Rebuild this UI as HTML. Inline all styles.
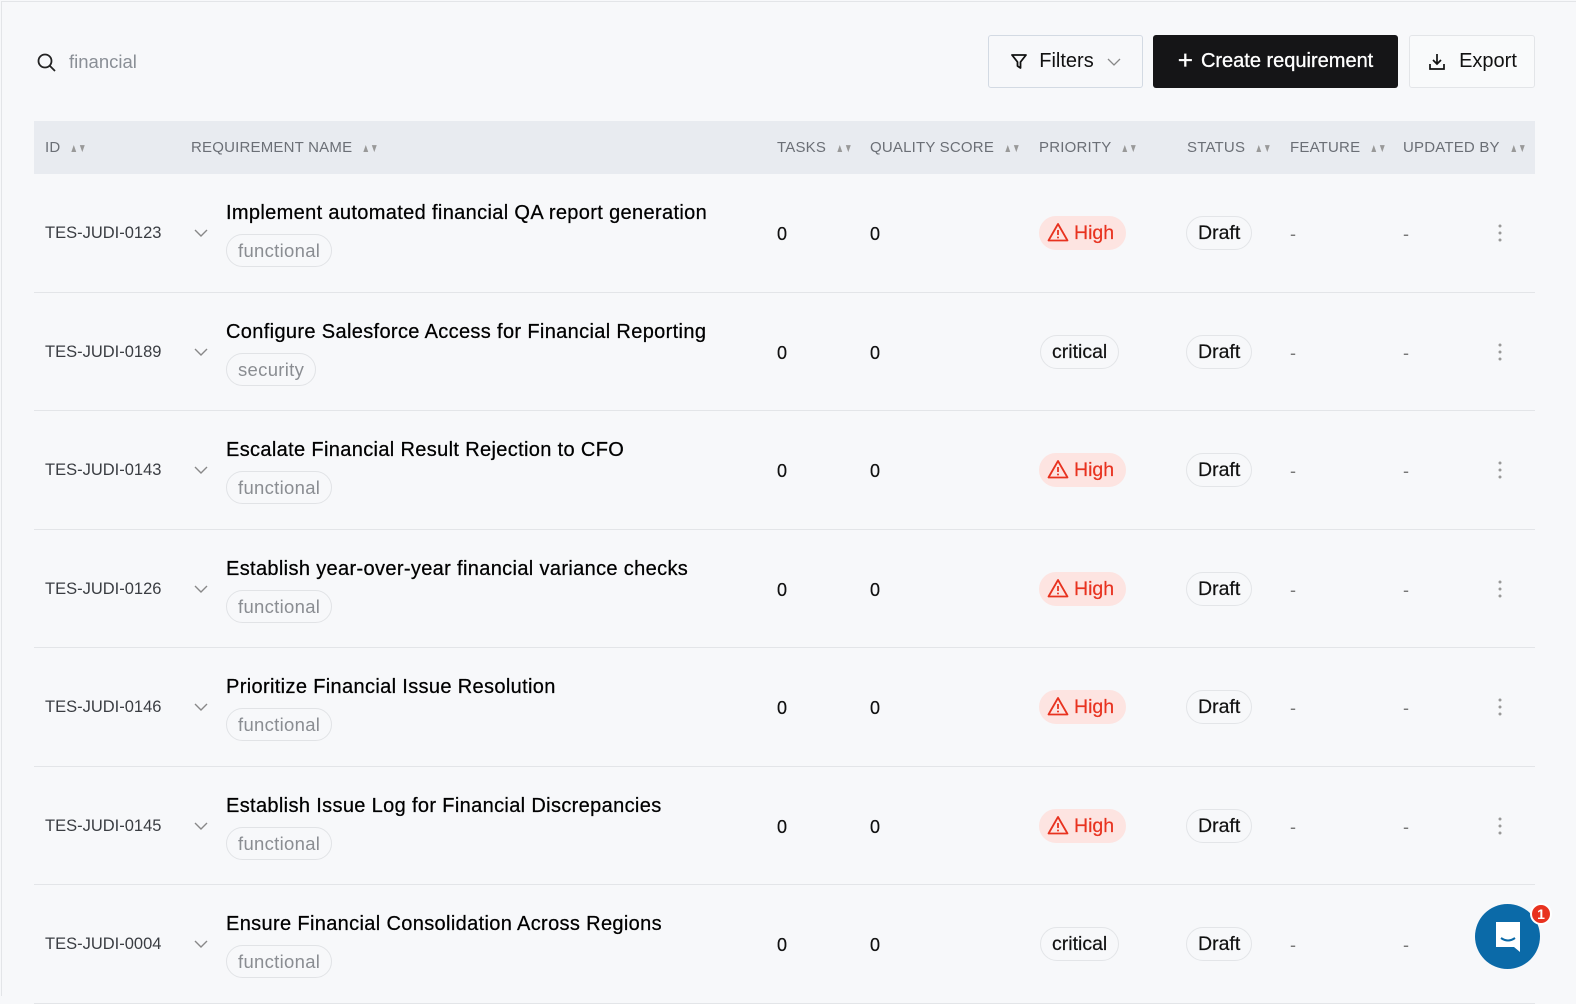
<!DOCTYPE html>
<html><head><style>
*{box-sizing:border-box;margin:0;padding:0}
body{width:1576px;height:996px;background:#f7f8fa;font-family:"Liberation Sans","DejaVu Sans",sans-serif;position:relative;overflow:hidden;color:#111}
.frame{position:absolute;left:1px;top:1px;right:0;bottom:0;border-left:1px solid #e3e5e8;border-top:1px solid #e3e5e8}
.abs{position:absolute}
.btn{position:absolute;top:35px;height:53px;display:flex;align-items:center;justify-content:center;font-size:20px;border-radius:3px}
.hdr{position:absolute;left:34px;top:121px;width:1501px;height:53px;background:#e8ebf0}
.hdr span{position:absolute;top:18px;font-size:15px;color:#6b6f76;letter-spacing:.2px}
.hdr span i{font-style:normal;font-size:12px;color:#999;margin-left:6px;display:inline-block;transform:scaleX(.7)}
.row{position:absolute;left:34px;width:1501px;height:118.5px;border-bottom:1px solid #e3e5e8}
.row .id{position:absolute;left:11px;top:50px;font-size:16.5px;color:#3a3d42}
.row .chev{position:absolute;left:160px;top:52px}
.row .t{position:absolute;left:192px;top:28px;font-size:20px;letter-spacing:.35px;color:#000;-webkit-text-stroke:.25px #000}
.row .tag{position:absolute;left:192px;top:60px;height:33px;padding:0 11px;border:1px solid #e1e3e6;border-radius:17px;font-size:18.5px;letter-spacing:.3px;color:#8a8d92;line-height:31px}
.row .n{position:absolute;top:50px;font-size:18px;-webkit-text-stroke:.2px #000}
.pill{position:absolute;top:42px;height:34px;border-radius:17px;font-size:19.5px;line-height:32px;padding:0 11px;border:1px solid #e3e5e8;-webkit-text-stroke:.2px currentColor}
.high{background:#fde4e1;color:#e8321f;border-color:#fde4e1;left:1005px;padding:0 11px 0 7px}
.crit{left:1006px}
.draft{left:1152px}
.dash{position:absolute;top:50px;font-size:18px;color:#777}
.dots{position:absolute;left:1463px;top:49px}
</style></head><body>
<div class="frame"></div>
<svg class="abs" style="left:36px;top:52px" width="22" height="22" viewBox="0 0 22 22"><circle cx="9" cy="9" r="6.5" fill="none" stroke="#222" stroke-width="1.8"/><path d="M14 14l5 5" stroke="#222" stroke-width="1.8"/></svg>
<div class="abs" style="left:69px;top:51px;font-size:18.5px;color:#8a8f96">financial</div>
<div class="btn" style="left:988px;width:155px;border:1px solid #d3dae3;background:#f7f8fa;color:#111">
<svg width="20" height="20" viewBox="0 0 20 20" style="margin-right:10px"><path d="M3 3h14l-5.5 7v6l-3-2v-4z" fill="none" stroke="#111" stroke-width="1.8" stroke-linejoin="round"/></svg>Filters
<svg width="16" height="16" viewBox="0 0 16 16" style="margin-left:12px"><path d="M2 5l6 6 6-6" fill="none" stroke="#888" stroke-width="1.3"/></svg></div>
<div class="btn" style="left:1153px;width:245px;background:#151517;color:#fff;border-radius:3px;-webkit-text-stroke:.3px #fff"><span style="font-size:26px;font-weight:300;margin-right:8px;margin-top:-3px">+</span>Create requirement</div>
<div class="btn" style="left:1409px;width:126px;border:1px solid #e3e5e8;background:#f9fafb;color:#111">
<svg width="20" height="20" viewBox="0 0 20 20" style="margin-right:12px"><path d="M10 2v10M6 8l4 4 4-4M3 12v5h14v-5" fill="none" stroke="#111" stroke-width="1.7"/></svg>Export</div>
<div class="hdr">
<span style="left:11px">ID<i>▲▼</i></span>
<span style="left:157px">REQUIREMENT NAME<i>▲▼</i></span>
<span style="left:743px">TASKS<i>▲▼</i></span>
<span style="left:836px">QUALITY SCORE<i>▲▼</i></span>
<span style="left:1005px">PRIORITY<i>▲▼</i></span>
<span style="left:1153px">STATUS<i>▲▼</i></span>
<span style="left:1256px">FEATURE<i>▲▼</i></span>
<span style="left:1369px">UPDATED BY<i>▲▼</i></span>
</div>
<div id="rows"></div>
<script>
var d=[["TES-JUDI-0123","Implement automated financial QA report generation","functional",1],
["TES-JUDI-0189","Configure Salesforce Access for Financial Reporting","security",0],
["TES-JUDI-0143","Escalate Financial Result Rejection to CFO","functional",1],
["TES-JUDI-0126","Establish year-over-year financial variance checks","functional",1],
["TES-JUDI-0146","Prioritize Financial Issue Resolution","functional",1],
["TES-JUDI-0145","Establish Issue Log for Financial Discrepancies","functional",1],
["TES-JUDI-0004","Ensure Financial Consolidation Across Regions","functional",0]];
var h="";
var warn='<svg width="22" height="20" viewBox="0 0 22 20" style="vertical-align:-3px;margin-right:5px"><path d="M11 2L1.5 18.5h19z" fill="none" stroke="#e8321f" stroke-width="1.8" stroke-linejoin="round"/><path d="M11 8v5" stroke="#e8321f" stroke-width="1.8"/><circle cx="11" cy="15.5" r="1" fill="#e8321f"/></svg>';
d.forEach(function(r,i){
h+='<div class="row" style="top:'+(174+i*118.5)+'px"><div class="id">'+r[0]+'</div>'+
'<svg class="chev" width="14" height="14" viewBox="0 0 14 14"><path d="M1 4l6 6 6-6" fill="none" stroke="#888" stroke-width="1.4"/></svg>'+
'<div class="t">'+r[1]+'</div><div class="tag">'+r[2]+'</div>'+
'<div class="n" style="left:743px">0</div><div class="n" style="left:836px">0</div>'+
(r[3]?'<div class="pill high">'+warn+'High</div>':'<div class="pill crit">critical</div>')+
'<div class="pill draft">Draft</div><div class="dash" style="left:1256px">-</div><div class="dash" style="left:1369px">-</div>'+
'<svg class="dots" width="6" height="20" viewBox="0 0 6 20"><circle cx="3" cy="3" r="1.5" fill="#999"/><circle cx="3" cy="10" r="1.5" fill="#999"/><circle cx="3" cy="17" r="1.5" fill="#999"/></svg></div>';
});
document.getElementById("rows").innerHTML=h;
</script>
<div class="abs" style="left:1475px;top:904px;width:65px;height:65px;border-radius:50%;background:#0b6aa8"></div>
<svg class="abs" style="left:1492px;top:920px" width="32" height="34" viewBox="0 0 32 34"><path d="M4 2h24v30l-6-5H4z" fill="#fff"/><path d="M9 18q7 5 14 0" fill="none" stroke="#0b6aa8" stroke-width="2"/></svg>
<div class="abs" style="left:1530px;top:903px;width:22px;height:22px;border-radius:50%;background:#e8321f;color:#fff;font-size:14px;font-weight:bold;text-align:center;line-height:18px;border:2px solid #fff">1</div>
</body></html>
